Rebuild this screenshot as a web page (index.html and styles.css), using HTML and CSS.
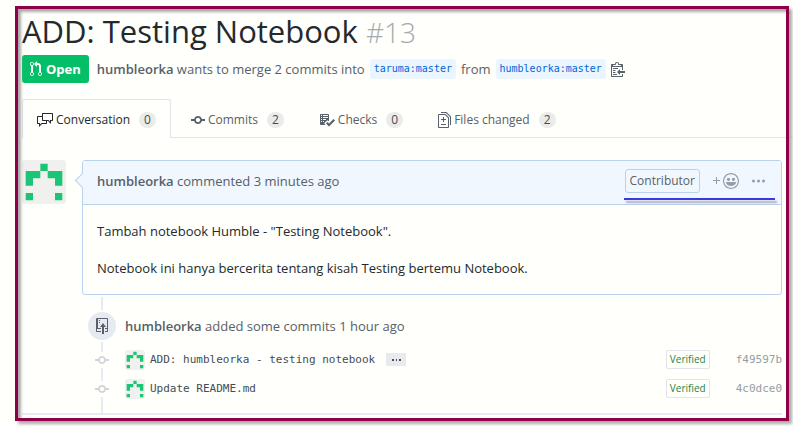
FILE: index.html
```
<!DOCTYPE html>
<html lang="en">
<head>
<meta charset="utf-8">
<title>ADD: Testing Notebook #13</title>
<link rel="stylesheet" href="styles.css">
</head>
<body>
<svg class="defs" aria-hidden="true">
  <symbol id="identicon" viewBox="0 0 12 12"><path fill="#f0f0ee" d="M0 0h12v12H0z"/><path fill="#1bc575" d="M5 1h2v2H5zM1 3h4v2H3v2H1zM7 3h4v4H9V5H7zM1 9h2v2H1zM9 9h2v2H9z"/></symbol>
  <symbol id="commit" viewBox="0 0 14 16"><path d="M10.86 7c-.45-1.72-2-3-3.86-3-1.86 0-3.41 1.28-3.86 3H0v2h3.14c.45 1.72 2 3 3.86 3 1.86 0 3.41-1.28 3.86-3H14V7h-3.14zM7 10.2c-1.22 0-2.2-.98-2.2-2.2 0-1.22.98-2.2 2.2-2.2 1.22 0 2.2.98 2.2 2.2 0 1.22-.98 2.2-2.2 2.2z"/></symbol>
</svg>
<main class="page">
  <header>
    <h1 class="title">ADD: Testing Notebook <span class="number">#13</span></h1>
    <div class="meta">
      <span class="state"><svg width="12" height="16" viewBox="0 0 12 16"><path d="M11 11.28V5c-.03-.78-.34-1.47-.94-2.06C9.46 2.35 8.78 2.03 8 2H7V0L4 3l3 3V4h1c.27.02.48.11.69.31.21.2.3.42.31.69v6.28A1.993 1.993 0 0 0 10 15a1.993 1.993 0 0 0 1-3.72zm-1 2.92c-.66 0-1.2-.55-1.2-1.2 0-.65.55-1.2 1.2-1.2.65 0 1.2.55 1.2 1.2 0 .65-.55 1.2-1.2 1.2zM4 3c0-1.11-.89-2-2-2a1.993 1.993 0 0 0-1 3.72v6.56A1.993 1.993 0 0 0 2 15a1.993 1.993 0 0 0 1-3.72V4.72c.59-.34 1-.98 1-1.72zm-.8 10c0 .66-.55 1.2-1.2 1.2-.65 0-1.2-.55-1.2-1.2 0-.65.55-1.2 1.2-1.2.65 0 1.2.55 1.2 1.2zM2 4.2C1.34 4.2.8 3.65.8 3c0-.65.55-1.2 1.2-1.2.65 0 1.2.55 1.2 1.2 0 .65-.55 1.2-1.2 1.2z"/></svg>Open</span>
      <span><a class="author" href="#">humbleorka</a> wants to merge 2 commits into</span>
      <a class="branch" href="#">taruma:master</a>
      <span>from</span>
      <a class="branch" href="#">humbleorka:master</a>
      <button class="icon-button" aria-label="Copy branch name"><svg width="14" height="16" viewBox="0 0 14 16"><path d="M2 13h4v1H2v-1zm5-6H2v1h5V7zm2 3V8l-3 3 3 3v-2h5v-2H9zM4.500 9H2v1h2.500V9zM2 12h2.500v-1H2v1zm9 1h1v2c-.02.28-.11.52-.3.7-.19.18-.42.28-.7.3H1c-.55 0-1-.45-1-1V4c0-.55.45-1 1-1h3c0-1.110.89-2 2-2 1.110 0 2 .89 2 2h3c.55 0 1 .45 1 1v5h-1V6H1v9h10v-2zM2 5h8c0-.55-.45-1-1-1H8c-.55 0-1-.45-1-1s-.45-1-1-1-1 .45-1 1-.45 1-1 1H3c-.55 0-1 .45-1 1z"/></svg></button>
    </div>
  </header>

  <nav class="tabs">
    <a class="tab selected" href="#"><svg width="16" height="16" viewBox="0 0 16 16"><path d="M15 1H6c-.55 0-1 .45-1 1v2H1c-.55 0-1 .45-1 1v6c0 .55.45 1 1 1h1v3l3-3h4c.55 0 1-.45 1-1V9h1l3 3V9h1c.55 0 1-.45 1-1V2c0-.55-.45-1-1-1zM9 11H4.500L3 12.500V11H1V5h4v3c0 .55.45 1 1 1h3v2zm6-3h-2v1.500L11.500 8H6V2h9v6z"/></svg>Conversation<span class="counter">0</span></a>
    <a class="tab" href="#"><svg width="14" height="16"><use href="#commit"/></svg>Commits<span class="counter">2</span></a>
    <a class="tab" href="#"><svg width="16" height="16" viewBox="0 0 16 16"><path d="M16 8.500l-6 6-3-3L8.500 10l1.500 1.500L14.500 7 16 8.500zM5.700 12.200l.8.8H2c-.55 0-1-.45-1-1V3c0-.55.45-1 1-1h7c.55 0 1 .45 1 1v6.500l-.8-.8c-.39-.39-1.030-.39-1.420 0L5.700 10.800a.996.996 0 0 0 0 1.410v-.01zM4 4h5V3H4v1zm0 2h5V5H4v1zm0 2h3V7H4v1zM3 9H2v1h1V9zm0-2H2v1h1V7zm0-2H2v1h1V5zm0-2H2v1h1V3zm1 7h1V9H4v1z"/></svg>Checks<span class="counter">0</span></a>
    <a class="tab" href="#"><svg width="13" height="16" viewBox="0 0 13 16"><path d="M6 7h2v1H6v2H5V8H3V7h2V5h1v2zm-3 6h5v-1H3v1zM7.500 2L11 5.500V15c0 .55-.45 1-1 1H1c-.55 0-1-.45-1-1V3c0-.55.45-1 1-1h6.500zM10 6L7 3H1v12h9V6zM8.500 0H3v1h5l4 4v8h1V4.500L8.500 0z"/></svg>Files changed<span class="counter">2</span></a>
  </nav>

  <section class="discussion">
    <svg class="avatar" width="44" height="44" role="img" aria-label="humbleorka"><use href="#identicon"/></svg>
    <article class="comment">
      <header class="comment-header">
        <span><a class="author" href="#">humbleorka</a> commented 3 minutes ago</span>
        <div class="actions">
          <span class="role">Contributor</span>
          <button class="icon-button react" aria-label="Add reaction"><svg width="7" height="16" viewBox="0 0 7 16"><path d="M4 4H3v3H0v1h3v3h1V8h3V7H4V4z"/></svg><svg width="16" height="16" viewBox="0 0 16 16"><path d="M8 0C3.580 0 0 3.580 0 8s3.580 8 8 8 8-3.580 8-8-3.580-8-8-8zm4.810 12.810a6.720 6.720 0 0 1-2.170 1.450c-.83.36-1.720.53-2.640.53-.92 0-1.810-.17-2.640-.53-.81-.34-1.550-.83-2.170-1.450a6.773 6.773 0 0 1-1.450-2.170A6.590 6.590 0 0 1 1.210 8c0-.92.17-1.810.53-2.640.34-.81.83-1.550 1.450-2.170.62-.62 1.360-1.110 2.170-1.450A6.590 6.590 0 0 1 8 1.210c.92 0 1.810.17 2.640.53.81.34 1.550.83 2.170 1.450.62.62 1.110 1.360 1.450 2.170.36.83.53 1.720.53 2.640 0 .92-.17 1.810-.53 2.640-.34.81-.83 1.550-1.450 2.170zM4 6.800v-.59c0-.66.53-1.190 1.200-1.190h.59c.66 0 1.190.53 1.190 1.190v.59c0 .67-.53 1.200-1.190 1.200H5.200C4.530 8 4 7.470 4 6.800zm5 0v-.59c0-.66.53-1.190 1.200-1.190h.59c.66 0 1.190.53 1.190 1.190v.59c0 .67-.53 1.200-1.190 1.200h-.59C9.530 8 9 7.470 9 6.800zm4 3.200c-.72 1.880-2.910 3-5 3s-4.280-1.130-5-3c-.14-.39.23-1 .66-1h8.590c.41 0 .89.61.75 1z"/></svg></button>
          <button class="icon-button" aria-label="More options"><svg width="13" height="16" viewBox="0 0 13 16"><circle cx="1.500" cy="8" r="1.500"/><circle cx="6.500" cy="8" r="1.500"/><circle cx="11.500" cy="8" r="1.500"/></svg></button>
        </div>
      </header>
      <div class="comment-body">
        <p>Tambah notebook Humble - "Testing Notebook".</p>
        <p>Notebook ini hanya bercerita tentang kisah Testing bertemu Notebook.</p>
      </div>
    </article>
  </section>

  <section class="timeline">
    <div class="event">
      <span class="badge"><svg width="12" height="16" viewBox="0 0 12 16"><path d="M4 3H3V2h1v1zM3 5h1V4H3v1zm4 0L4 9h2v7h2V9h2L7 5zm4-5H1C.45 0 0 .45 0 1v12c0 .55.45 1 1 1h4v-1H1v-2h4v-1H2V1h9.020L11 10H9v1h2v2H9v1h2c.55 0 1-.45 1-1V1c0-.55-.45-1-1-1z"/></svg></span>
      <span><a class="author" href="#">humbleorka</a> added some commits 1 hour ago</span>
    </div>
    <div class="event commit">
      <svg class="node" width="14" height="16"><use href="#commit"/></svg>
      <div class="commit-line">
        <svg class="avatar" width="20" height="20"><use href="#identicon"/></svg>
        <a class="message" href="#">ADD: humbleorka - testing notebook</a>
        <button class="expander" aria-label="Show description"><svg width="9" height="3" viewBox="0 0 9 3"><path d="M0 1h2v2H0zM4 1h1v2H4zM7 1h2v2H7z"/></svg></button>
        <button class="verified">Verified</button>
        <a class="sha" href="#">f49597b</a>
      </div>
    </div>
    <div class="event commit">
      <svg class="node" width="14" height="16"><use href="#commit"/></svg>
      <div class="commit-line">
        <svg class="avatar" width="20" height="20"><use href="#identicon"/></svg>
        <a class="message" href="#">Update README.md</a>
        <button class="verified">Verified</button>
        <a class="sha" href="#">4c0dce0</a>
      </div>
    </div>
  </section>
</main>
</body>
</html>
```
FILE: styles.css
```
:root {
  --paper: #fffffb;
  --muted: #586069;
  --line: #e1e4e8;
  --blue-line: #b9d3ee;
}

* { box-sizing: border-box; }

body {
  margin: 0;
  padding: 6px 4px 6px 15px;
  background: var(--paper);
  color: #24292e;
  font: 13px/20px "Open Sans", "Noto Sans", sans-serif;
}

a { color: inherit; text-decoration: none; }
button { font: inherit; cursor: pointer; }
svg { fill: currentColor; flex: none; }
.defs { display: none; }

.page {
  position: relative;
  padding: 5px 7px 6px;
}

/* Frame drawn over the content, with its shadow falling down and right */
.page::after {
  content: "";
  position: absolute;
  inset: 0;
  border: 3px solid #900048;
  box-shadow: 3px 3px 3px #aaa, inset 3px 3px 3px #aaa;
  pointer-events: none;
}

.title {
  margin: 0 0 4px;
  font-size: 31px;
  line-height: 40px;
  font-weight: 400;
}
.number { color: #a3aab1; font-size: 28px; line-height: 1; font-weight: 300; }

.meta {
  display: flex;
  align-items: center;
  gap: 5px;
  color: var(--muted);
}
.author { font-weight: 600; }
.state {
  display: flex;
  align-items: center;
  gap: 4px;
  margin-right: 3px;
  padding: 4px 8px;
  border-radius: 3px;
  background: #05bf68;
  color: #fff;
  font-weight: 700;
}
.branch {
  padding: 0 4px;
  border-radius: 3px;
  background: #eaf5ff;
  color: #0366d6;
  font: 10px/20px "DejaVu Sans Mono", monospace;
}

.icon-button {
  display: flex;
  padding: 0;
  border: 0;
  background: none;
  color: inherit;
}

.tabs {
  display: flex;
  gap: 5px;
  margin: 16px -11px 22px 0;
  border-bottom: 1px solid var(--line);
  font-size: 12px;
}
.tab {
  display: flex;
  align-items: center;
  gap: 3px;
  margin-bottom: -1px;
  padding: 10px 14px 8px;
  border: 1px solid transparent;
  border-bottom: 0;
  color: var(--muted);
}
.selected {
  border-color: var(--line);
  border-radius: 3px 3px 0 0;
  background: var(--paper);
  color: #24292e;
}
.counter {
  margin-left: 6px;
  padding: 0 5px;
  border-radius: 8px;
  background: #ebebea;
  color: #444d56;
  line-height: 16px;
}

.discussion {
  display: flex;
  align-items: flex-start;
  gap: 16px;
}
.avatar { border-radius: 3px; }

.comment {
  position: relative;
  flex: 1;
  border: 1px solid var(--blue-line);
  border-radius: 3px;
}
.comment::before {
  content: "";
  position: absolute;
  top: 14px;
  left: -6px;
  width: 10px;
  height: 10px;
  border: solid var(--blue-line);
  border-width: 0 0 1px 1px;
  background: #f0f7ff;
  transform: rotate(45deg);
}
.comment-header {
  position: relative;
  display: flex;
  align-items: center;
  justify-content: space-between;
  padding: 8px 16px 11px 14px;
  border-bottom: 1px solid var(--blue-line);
  background: #f0f7ff;
  color: var(--muted);
}
.actions {
  display: flex;
  align-items: center;
  gap: 13px;
  color: #959da5;
}
/* Hand-drawn underline beneath the comment controls */
.actions::after {
  content: "";
  position: absolute;
  right: 6px;
  bottom: 4px;
  width: 151px;
  height: 2px;
  background: #3838e4;
  box-shadow: 2px 3px 2px #aab;
}
.role {
  padding: 0 4px;
  border: 1px solid var(--blue-line);
  border-radius: 3px;
  color: var(--muted);
  font-size: 12px;
  line-height: 22px;
}
.react { align-items: center; gap: 3px; }

.comment-body { padding: 16px 14px; }
.comment-body p { margin: 0 0 17px; }
.comment-body p:last-child { margin: 0; }

.timeline {
  position: relative;
  padding: 15px 0 10px 66px;
  border-bottom: 2px solid #e6ebf1;
}
.timeline::before {
  content: "";
  position: absolute;
  top: 2px;
  bottom: 0;
  left: 79px;
  width: 2px;
  background: #e6ebf1;
}
.event {
  position: relative;
  display: grid;
  grid-template-columns: 28px 1fr;
  align-items: center;
  gap: 9px;
  margin-bottom: 3px;
  color: var(--muted);
}
.badge {
  display: grid;
  place-items: center;
  width: 32px;
  height: 32px;
  margin-left: -2px;
  border: 2px solid var(--paper);
  border-radius: 50%;
  background: #e6ebf1;
}
.commit { height: 29px; margin: 0; }
.node {
  justify-self: center;
  background: var(--paper);
  color: #d1d5da;
}
.commit-line {
  display: flex;
  align-items: center;
  gap: 5px;
  font: 11px/20px "DejaVu Sans Mono", monospace;
}
.message { color: #444d56; }
.expander {
  display: grid;
  place-items: center;
  width: 20px;
  height: 13px;
  margin-left: 6px;
  padding: 0;
  border: 0;
  background: #e9eaee;
  color: #444d56;
}
.verified {
  margin-left: auto;
  padding: 0 3px;
  border: 1px solid var(--line);
  border-radius: 2px;
  background: none;
  color: #1c8547;
  font: 10px/17px "Open Sans", sans-serif;
}
.sha { margin-left: 21px; color: #959da5; }
```
